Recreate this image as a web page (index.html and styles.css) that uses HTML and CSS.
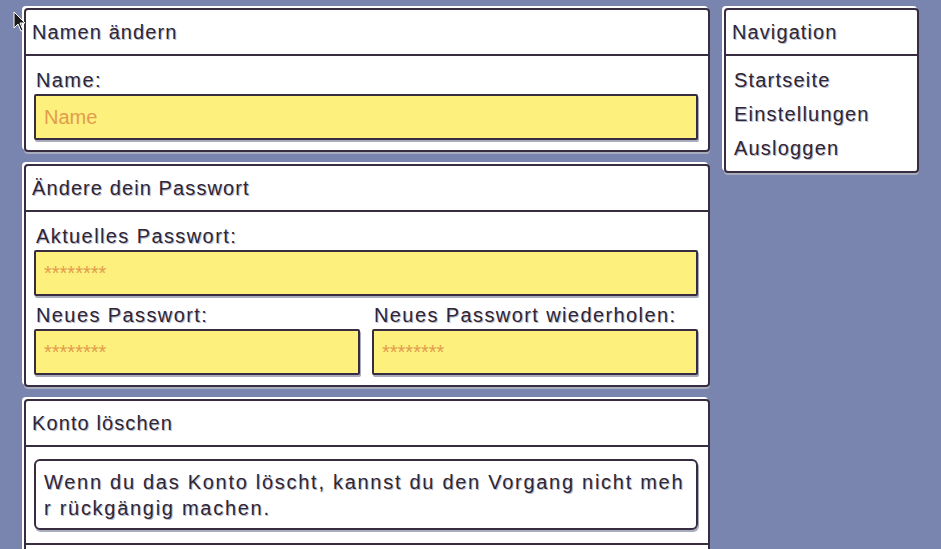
FILE: index.html
```html
<!DOCTYPE html>
<html lang="de">
<head>
<meta charset="utf-8">
<title>Einstellungen</title>
<link rel="stylesheet" href="styles.css">
</head>
<body>
<div class="page">
  <main class="main">
    <section class="card">
      <header class="card-head">Namen ändern</header>
      <div class="card-body">
        <label class="label" for="name">Name:</label>
        <input class="input" id="name" type="text" placeholder="Name">
      </div>
    </section>

    <section class="card">
      <header class="card-head">Ändere dein Passwort</header>
      <div class="card-body">
        <label class="label" for="pw-current">Aktuelles Passwort:</label>
        <input class="input" id="pw-current" type="password" placeholder="********">
        <div class="row">
          <div class="col">
            <label class="label" for="pw-new">Neues Passwort:</label>
            <input class="input" id="pw-new" type="password" placeholder="********">
          </div>
          <div class="col">
            <label class="label" for="pw-repeat">Neues Passwort wiederholen:</label>
            <input class="input" id="pw-repeat" type="password" placeholder="********">
          </div>
        </div>
      </div>
    </section>

    <section class="card">
      <header class="card-head">Konto löschen</header>
      <div class="card-body card-body--delete">
        <p class="notice">Wenn du das Konto löscht, kannst du den Vorgang nicht mehr rückgängig machen.</p>
      </div>
      <div class="card-foot"></div>
    </section>
  </main>

  <aside class="card nav">
    <header class="card-head">Navigation</header>
    <nav class="nav-list">
      <a class="nav-link" href="#">Startseite</a>
      <a class="nav-link" href="#">Einstellungen</a>
      <a class="nav-link" href="#">Ausloggen</a>
    </nav>
  </aside>
</div>

<svg class="cursor" width="14" height="22" viewBox="0 0 14 22" aria-hidden="true">
  <path d="M1 1 L1 17 L5 13 L8 20 L10 19 L7 12 L12 12 Z" fill="#1a1a1a" stroke="#ffffff" stroke-width="1"/>
</svg>
</body>
</html>
```

FILE: styles.css
```css
html, body {
  margin: 0;
  padding: 0;
}

body {
  background: #7985ae;
  font-family: "Liberation Sans", Arial, sans-serif;
  font-size: 20px;
  color: #2f2534;
}

.page {
  display: flex;
  align-items: flex-start;
  gap: 14px;
  padding: 8px 0 0 24px;
}

.main {
  width: 686px;
  display: flex;
  flex-direction: column;
  gap: 12px;
}

.card {
  background: #ffffff;
  border: 2px solid #382d40;
  border-radius: 4px;
  box-sizing: border-box;
  box-shadow: -2px -2px 0 0 #ffffff, 0 2px 0 0 #a8acbc;
}

.card-head {
  height: 44px;
  line-height: 44px;
  padding: 0 6px;
  border-bottom: 2px solid #382d40;
  letter-spacing: 1.1px;
  text-shadow: 1px 1px 0 #b8bccb;
}

.card-body {
  padding: 5px 10px 10px 8px;
}

.card-body--delete {
  padding: 12px 10px 13px 8px;
}

.label {
  display: block;
  padding: 8px 0 3px 2px;
  line-height: 22px;
  letter-spacing: 1.4px;
  text-shadow: 1px 1px 0 #b8bccb;
  white-space: nowrap;
}

.input {
  display: block;
  width: 100%;
  height: 46px;
  box-sizing: border-box;
  margin: 0;
  padding: 0 8px;
  border: 2px solid #382d40;
  border-radius: 2px;
  background: #fdf07d;
  font-family: inherit;
  font-size: 20px;
  letter-spacing: 0;
  color: #2f2534;
  box-shadow: 1px 2px 0 0 #a8acbc;
  outline: none;
}

.input::placeholder {
  color: #e29c4e;
  opacity: 1;
}

.row {
  display: grid;
  grid-template-columns: 1fr 1fr;
  gap: 12px;
}

.col {
  min-width: 0;
}

.notice {
  margin: 0;
  padding: 8px 8px 7px 8px;
  border: 2px solid #382d40;
  border-radius: 6px;
  line-height: 26px;
  letter-spacing: 1.72px;
  word-break: break-all;
  text-shadow: 1px 1px 0 #b8bccb;
  box-shadow: 1px 2px 0 0 #a8acbc;
}

.card-foot {
  height: 44px;
  border-top: 2px solid #382d40;
}

.nav {
  width: 195px;
}

.nav-list {
  display: block;
  padding: 7px 8px 6px 8px;
}

.nav-link {
  display: block;
  line-height: 34px;
  color: #2f2534;
  text-decoration: none;
  letter-spacing: 1.2px;
  text-shadow: 1px 1px 0 #b8bccb;
}

.cursor {
  position: fixed;
  left: 13px;
  top: 11px;
}
```
